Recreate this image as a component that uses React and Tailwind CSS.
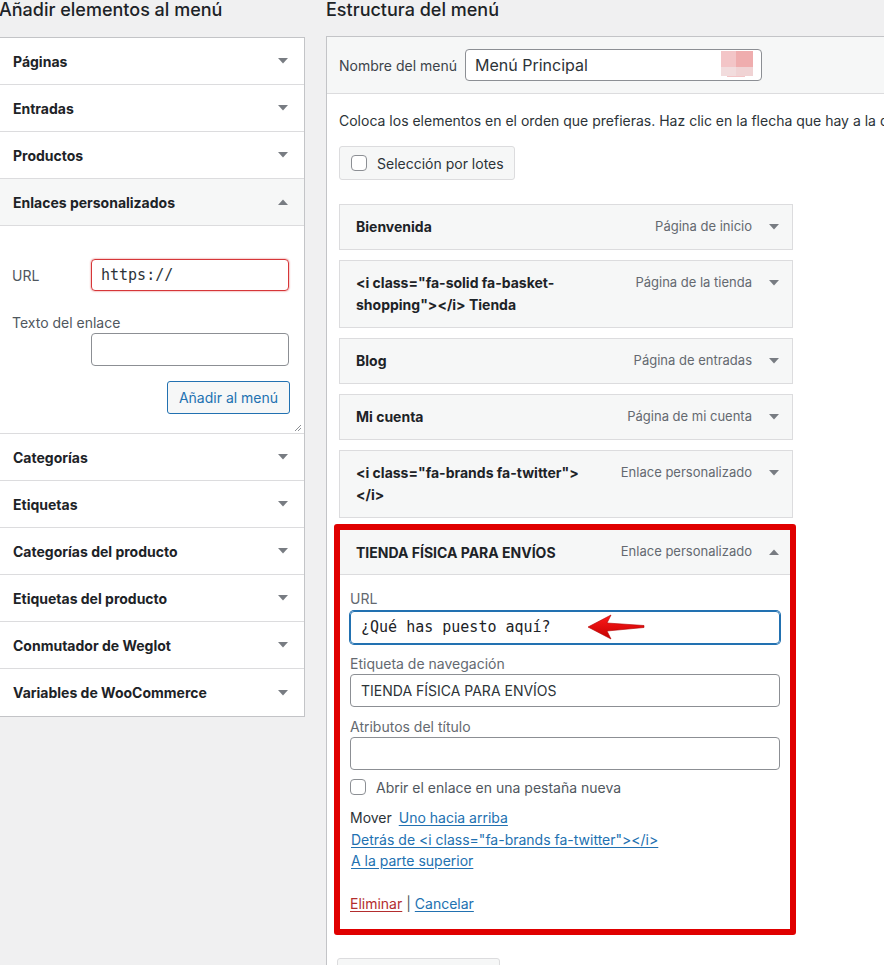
import React from 'react';

const Caret = ({ up }) => (
  <svg width="10" height="6" viewBox="0 0 10 6" className="shrink-0">
    <path d={up ? 'M0 6 L5 0.5 L10 6 Z' : 'M0 0 L10 0 L5 5.5 Z'} fill="#787c82" />
  </svg>
);

const Checkbox = () => (
  <span className="w-[16px] h-[16px] shrink-0 rounded-[4px] border border-[#8c8f94] bg-white" />
);

const SectionRow = ({ label, up, active }) => (
  <div
    className={`h-[47px] border-b border-[#dcdcde] flex items-center justify-between pl-[13px] pr-[16px] ${
      active ? 'bg-[#f6f7f7]' : 'bg-white'
    }`}
  >
    <span className="text-[14px] font-bold text-[#1d2327]">{label}</span>
    <Caret up={up} />
  </div>
);

const topSections = ['Páginas', 'Entradas', 'Productos'];
const bottomSections = [
  'Categorías',
  'Etiquetas',
  'Categorías del producto',
  'Etiquetas del producto',
  'Conmutador de Weglot',
  'Variables de WooCommerce',
];

const menuItems = [
  { title: ['Bienvenida'], type: 'Página de inicio' },
  { title: ['<i class="fa-solid fa-basket-', 'shopping"></i> Tienda'], type: 'Página de la tienda' },
  { title: ['Blog'], type: 'Página de entradas' },
  { title: ['Mi cuenta'], type: 'Página de mi cuenta' },
  { title: ['<i class="fa-brands fa-twitter">', '</i>'], type: 'Enlace personalizado' },
];

const MenuItem = ({ item }) => (
  <div className="border border-[#dcdcde] bg-[#f6f7f7] flex items-start justify-between pl-[16px] py-[11px]">
    <div className="text-[14px] leading-[22px] font-bold text-[#1d2327]">
      {item.title.map((line) => (
        <div key={line} className="whitespace-nowrap">
          {line}
        </div>
      ))}
    </div>
    <div className="flex items-center h-[22px]">
      <span className="text-[13px] text-[#646970] whitespace-nowrap">{item.type}</span>
      <span className="ml-[17px] mr-[13px] flex">
        <Caret />
      </span>
    </div>
  </div>
);

const RedArrow = () => (
  <svg width="60" height="28" viewBox="0 0 60 28" className="absolute left-[236px] top-[1px]">
    <defs>
      <linearGradient id="arrowFill" x1="0" y1="0" x2="0" y2="1">
        <stop offset="0" stopColor="#ff1a1a" />
        <stop offset="1" stopColor="#c40000" />
      </linearGradient>
    </defs>
    <path
      d="M1 14 L24 2 L20 10 L57 12.5 L57 14.5 L20 18 L24 26 Z"
      fill="url(#arrowFill)"
      stroke="#b00000"
      strokeWidth="0.6"
      strokeLinejoin="round"
    />
  </svg>
);

export default function App() {
  return (
    <div className="w-[884px] h-[965px] overflow-hidden bg-[#f0f0f1] font-['Inter','Liberation_Sans',Arial,sans-serif] text-[#1d2327] flex items-start gap-[21px]">
      {/* left column */}
      <div className="w-[305px] shrink-0">
        <h2 className="h-[38px] -mt-[1px] -ml-[1px] text-[18px] leading-[22px] font-medium text-[#1d2327] whitespace-nowrap">
          Añadir elementos al menú
        </h2>
        <div className="border-t border-b border-r border-[#c3c4c7] bg-white">
          {topSections.map((s) => (
            <SectionRow key={s} label={s} />
          ))}
          <SectionRow label="Enlaces personalizados" up active />
          <div className="relative h-[208px] border-b border-[#dcdcde] px-[12px] pt-[33px]">
            <div className="flex items-center">
              <span className="w-[79px] text-[14px] text-[#50575e]">URL</span>
              <div className="w-[198px] h-[32px] rounded-[4px] border border-[#d63638] shadow-[0_0_2px_rgba(214,54,56,0.8)] flex items-center px-[9px] font-['DejaVu_Sans_Mono','Liberation_Mono',monospace] text-[15px] text-[#2c3338]">
                https://
              </div>
            </div>
            <div className="mt-[22px] text-[14px] leading-[20px] text-[#50575e]">Texto del enlace</div>
            <div className="ml-[79px] w-[198px] h-[33px] rounded-[4px] border border-[#8c8f94] bg-white" />
            <div className="mt-[15px] ml-[155px] w-[123px] h-[33px] rounded-[3px] border border-[#2271b1] bg-[#f6f7f7] text-[#2271b1] text-[14px] flex items-center justify-center whitespace-nowrap">
              Añadir al menú
            </div>
            <svg width="8" height="8" viewBox="0 0 8 8" className="absolute right-[2px] bottom-[1px]">
              <path d="M7 1 L1 7 M7 4 L4 7" stroke="#8c8f94" strokeWidth="1" />
            </svg>
          </div>
          {bottomSections.map((s, i) => (
            <div key={s} className={i === bottomSections.length - 1 ? '[&>div]:border-b-0' : ''}>
              <SectionRow label={s} />
            </div>
          ))}
        </div>
      </div>

      {/* right column */}
      <div className="w-[600px] shrink-0">
        <h2 className="h-[37px] -mt-[1px] text-[18px] leading-[22px] font-medium text-[#1d2327] whitespace-nowrap">
          Estructura del menú
        </h2>
        <div className="border-t border-l border-[#c3c4c7] bg-white h-[940px]">
          <div className="h-[57px] bg-[#f6f7f7] border-b border-[#dcdcde] flex items-center pl-[12px]">
            <span className="text-[14px] text-[#3c434a] whitespace-nowrap">Nombre del menú</span>
            <div className="relative ml-[8px] w-[297px] h-[32px] shrink-0 rounded-[4px] border border-[#8c8f94] bg-white flex items-center px-[9px] text-[16px] text-[#2c3338]">
              Menú Principal
              <div className="absolute left-[255px] top-[1px] flex flex-col">
                <div className="flex">
                  <span className="w-[15px] h-[16px] bg-[#f3c5c7]" />
                  <span className="w-[17px] h-[16px] bg-[#efadae]" />
                </div>
                <div className="flex">
                  <span className="w-[15px] h-[9px] bg-[#f2dcdd]" />
                  <span className="w-[17px] h-[9px] bg-[#f0d3d4]" />
                </div>
                <span className="ml-[6px] w-[18px] h-[1px] bg-[#f3c5c7]" />
              </div>
            </div>
          </div>
          <div className="pl-[12px] pt-[17px]">
            <p className="text-[14px] leading-[20px] text-[#2c3338] whitespace-nowrap">
              Coloca los elementos en el orden que prefieras. Haz clic en la flecha que hay a la derecha del elemento para mostrar más opciones de configuración.
            </p>
            <div className="mt-[15px] w-[176px] h-[34px] rounded-[3px] border border-[#dcdcde] bg-[#f6f7f7] flex items-center pl-[11px] gap-[10px]">
              <Checkbox />
              <span className="text-[14px] text-[#2c3338] whitespace-nowrap">Selección por lotes</span>
            </div>

            <div className="mt-[24px] w-[454px] flex flex-col gap-[10px]">
              {menuItems.map((item) => (
                <MenuItem key={item.type + item.title[0]} item={item} />
              ))}
            </div>

            <div className="mt-[6px] -ml-[5px] w-[462px] rounded-[3px] border-[6px] border-[#e00000] bg-white">
              <div className="h-[45px] bg-[#f6f7f7] border-b border-[#dcdcde] flex items-center justify-between pl-[16px]">
                <span className="text-[14px] font-bold text-[#1d2327] whitespace-nowrap">TIENDA FÍSICA PARA ENVÍOS</span>
                <div className="flex items-center">
                  <span className="text-[13px] text-[#646970] whitespace-nowrap">Enlace personalizado</span>
                  <span className="ml-[17px] mr-[11px] flex">
                    <Caret up />
                  </span>
                </div>
              </div>
              <div className="px-[10px] pt-[14px] pb-[15px]">
                <div className="text-[14px] leading-[20px] text-[#646970]">URL</div>
                <div className="relative mt-[2px] h-[33px] rounded-[4px] border border-[#2271b1] shadow-[0_0_0_1px_#2271b1] flex items-center px-[10px] font-['DejaVu_Sans_Mono','Liberation_Mono',monospace] text-[15px] text-[#1d2327] whitespace-nowrap">
                  ¿Qué has puesto aquí?
                  <RedArrow />
                </div>
                <div className="mt-[10px] text-[14px] leading-[20px] text-[#646970]">Etiqueta de navegación</div>
                <div className="h-[33px] rounded-[4px] border border-[#8c8f94] flex items-center px-[10px] text-[14px] text-[#2c3338] whitespace-nowrap">
                  TIENDA FÍSICA PARA ENVÍOS
                </div>
                <div className="mt-[10px] text-[14px] leading-[20px] text-[#646970]">Atributos del título</div>
                <div className="h-[33px] rounded-[4px] border border-[#8c8f94]" />
                <div className="mt-[7px] h-[20px] flex items-center gap-[10px]">
                  <Checkbox />
                  <span className="text-[14px] text-[#50575e] whitespace-nowrap">Abrir el enlace en una pestaña nueva</span>
                </div>
                <div className="mt-[11px] text-[14px] leading-[20px] text-[#2c3338] whitespace-nowrap">
                  Mover <span className="ml-[3px] text-[#2271b1] underline underline-offset-2">Uno hacia arriba</span>
                </div>
                <div className="mt-[1px] ml-[1px] text-[14px] leading-[21px] text-[#2271b1] underline underline-offset-2 whitespace-nowrap">
                  Detrás de &lt;i class="fa-brands fa-twitter"&gt;&lt;/i&gt;
                </div>
                <div className="ml-[1px] text-[14px] leading-[21px] text-[#2271b1] underline underline-offset-2">
                  A la parte superior
                </div>
                <div className="mt-[23px] text-[14px] leading-[20px] text-[#50575e]">
                  <span className="text-[#b32d2e] underline underline-offset-2">Eliminar</span>
                  {' | '}
                  <span className="text-[#2271b1] underline underline-offset-2">Cancelar</span>
                </div>
              </div>
            </div>

            <div className="mt-[23px] -ml-[2px] w-[163px] h-[32px] rounded-[3px] border border-[#dcdcde] bg-[#f6f7f7]" />
          </div>
        </div>
      </div>
    </div>
  );
}
